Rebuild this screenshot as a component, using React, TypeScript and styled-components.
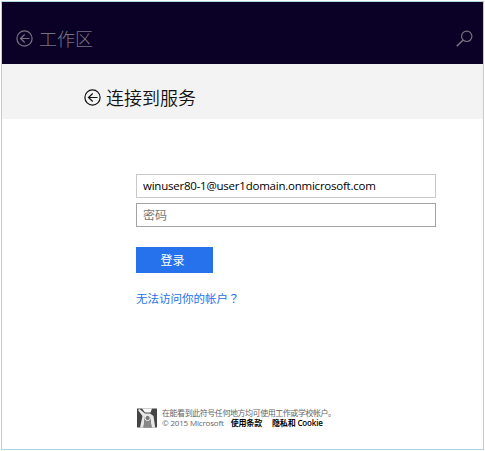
import React from 'react';
import styled, { createGlobalStyle } from 'styled-components';

const GlobalStyle = createGlobalStyle`
  * { box-sizing: border-box; }
  body {
    margin: 0;
    background: #fff;
    font-family: "Open Sans", "Noto Sans CJK SC", sans-serif;
  }
`;

const Window = styled.div`
  display: flex;
  flex-direction: column;
  width: 483px;
  height: 449px;
  margin: 1px;
  border: 1px solid #add3e8;
  background: #fff;
  overflow: hidden;
`;

const TitleBar = styled.header`
  display: flex;
  flex: none;
  align-items: center;
  height: 62px;
  padding: 12px 9px 0 14px;
  background: #0b0025;
  color: #777481;
`;

const SubHeader = styled.div`
  display: flex;
  flex: none;
  align-items: center;
  height: 55px;
  padding: 12px 0 0 82px;
  background: #f3f3f3;
  color: #111;
`;

const Heading = styled.h1<{ $indent: number; $light?: boolean }>`
  margin: 0 0 0 ${p => p.$indent}px;
  font-size: 18px;
  line-height: 24px;
  font-weight: ${p => (p.$light ? 300 : 350)};
  flex: 1;
`;

const Icon = styled.svg`
  display: block;
  flex: none;
  fill: none;
  stroke: currentColor;
`;

const Form = styled.form`
  display: flex;
  flex-direction: column;
  align-items: flex-start;
  padding: 55px 0 0 134px;
`;

const Field = styled.input<{ $strong?: boolean }>`
  width: 300px;
  height: 24px;
  margin: 0 0 5px;
  padding: 0 6px ${p => (p.$strong ? 0 : 2)}px;
  border: 1px solid ${p => (p.$strong ? '#a3a3a3' : '#c9c9c9')};
  border-radius: 0;
  outline: none;
  background: #fff;
  color: #000;
  font: 11.5px/20px "Open Sans", "Noto Sans CJK SC", sans-serif;
  letter-spacing: -0.23px;
  &::placeholder { color: #777; opacity: 1; font-size: 12px; letter-spacing: 0; }
`;

const SignIn = styled.button`
  width: 77px;
  height: 26px;
  margin-top: 15px;
  padding: 0 4px 0 0;
  border: 0;
  background: #2672ec;
  color: #fff;
  font: 12px/26px "Noto Sans CJK SC", sans-serif;
`;

const HelpLink = styled.a`
  margin-top: 16px;
  color: #2672ec;
  font: 11.5px/18px "Noto Sans CJK SC", sans-serif;
  white-space: nowrap;
`;

const CenteredMark = styled.span`
  font-family: "Noto Sans CJK TC", sans-serif;
`;

const Footer = styled.footer`
  display: flex;
  margin: auto 0 21px 135px;
  gap: 5px;
  align-items: center;
`;

const Notes = styled.div`
  color: #666;
  font-size: 8px;
  line-height: 10px;
  white-space: nowrap;
`;

const NoteLine = styled.div<{ $spacing: number }>`
  display: flex;
  height: 10px;
  letter-spacing: ${p => p.$spacing}px;
`;

const Legal = styled.a<{ $gap: number }>`
  margin-left: ${p => p.$gap}px;
  color: #000;
  font-weight: 600;
`;

const BackIcon = () => (
  <Icon width="18" height="18" viewBox="0 0 18 18" strokeWidth="1.2">
    <circle cx="8.5" cy="8.5" r="7.6" />
    <path d="M4.5 8.5H13.5M8.7 4.5L4.5 8.5L8.7 12.5" />
  </Icon>
);

const SearchIcon = () => (
  <Icon width="18" height="18" viewBox="0 0 18 18" strokeWidth="1.2">
    <circle cx="10.7" cy="6.3" r="5.2" />
    <path d="M6.9 10.2L0.7 16.3" strokeWidth="1.6" />
  </Icon>
);

const BadgeIcon = () => (
  <Icon width="20" height="20" viewBox="0 0 20 20" strokeWidth="0">
    <path d="M0 .5H20V19.5H0Z" fill="#444" />
    <path d="M5 .5H15L13.5 4.5H8Z" fill="#fafafa" />
    <path d="M1 2L2.5 1L8 5.5H13L16.5 8L18.2 19.5H14.6L13 8.5H8L6.5 19.5H3L5.5 8Z" fill="#e6e6e6" />
    <path d="M8 8.5H13L14.6 19.5H6.5Z" fill="#888" />
    <circle cx="10.6" cy="10" r="2.6" fill="#777" stroke="#eee" strokeWidth="1" />
  </Icon>
);

export default function App() {
  return (
    <>
      <GlobalStyle />
      <Window>
        <TitleBar>
          <BackIcon />
          <Heading $indent={5} $light>工作区</Heading>
          <SearchIcon />
        </TitleBar>
        <SubHeader>
          <BackIcon />
          <Heading $indent={4}>连接到服务</Heading>
        </SubHeader>
        <Form>
          <Field type="text" defaultValue="winuser80-1@user1domain.onmicrosoft.com" spellCheck={false} />
          <Field type="password" placeholder="密码" $strong />
          <SignIn type="button">登录</SignIn>
          <HelpLink>无法访问你的帐户<CenteredMark lang="zh-TW">？</CenteredMark></HelpLink>
        </Form>
        <Footer>
          <BadgeIcon />
          <Notes>
            <NoteLine $spacing={-0.45}>在能看到此符号任何地方均可使用工作或学校帐户。</NoteLine>
            <NoteLine $spacing={-0.17}>
              © 2015 Microsoft
              <Legal $gap={7}>使用条款</Legal>
              <Legal $gap={10}>隐私和 Cookie</Legal>
            </NoteLine>
          </Notes>
        </Footer>
      </Window>
    </>
  );
}
